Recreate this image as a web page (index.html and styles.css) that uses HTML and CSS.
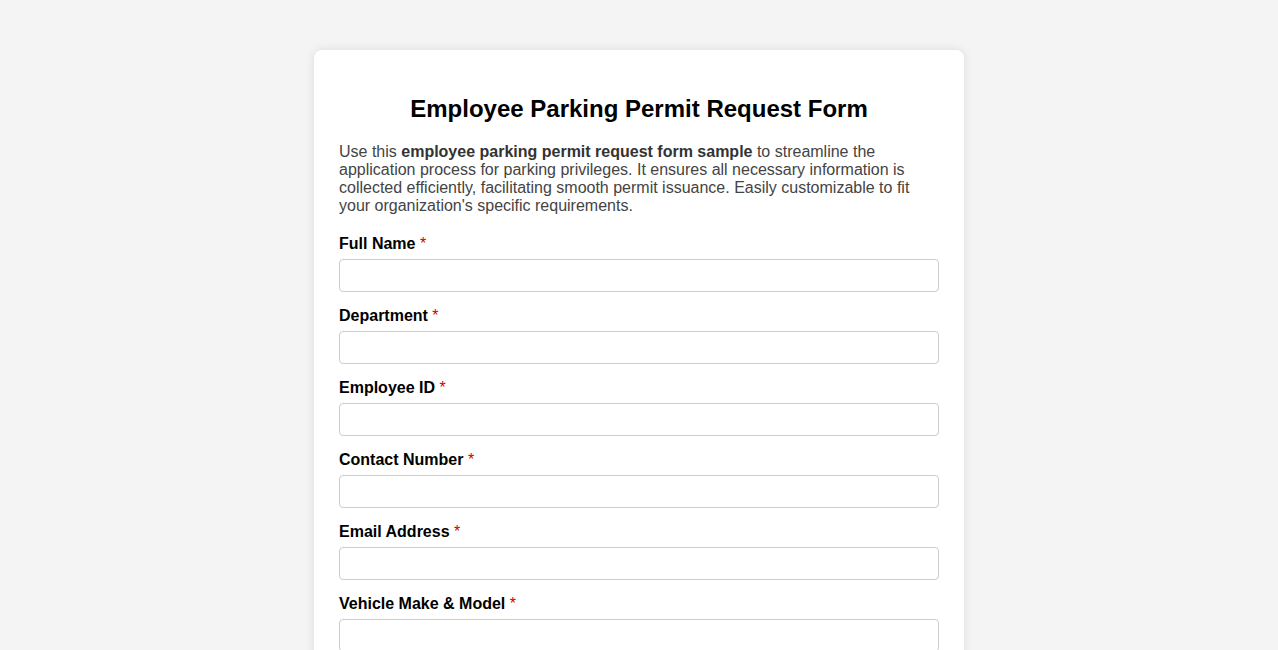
FILE: index.html
```html
<!DOCTYPE html>
<html lang="en">
<head>
<meta charset="utf-8">
<title>Employee Parking Permit Request Form</title>
<link rel="stylesheet" href="styles.css">
</head>
<body>
<div class="card">
  <h2 class="title">Employee Parking Permit Request Form</h2>
  <p class="intro">Use this <strong>employee parking permit request form sample</strong> to streamline the application process for parking privileges. It ensures all necessary information is collected efficiently, facilitating smooth permit issuance. Easily customizable to fit your organization's specific requirements.</p>
  <form>
    <div class="field">
      <label for="name">Full Name <span class="req">*</span></label>
      <input id="name" type="text">
    </div>
    <div class="field">
      <label for="dept">Department <span class="req">*</span></label>
      <input id="dept" type="text">
    </div>
    <div class="field">
      <label for="empid">Employee ID <span class="req">*</span></label>
      <input id="empid" type="text">
    </div>
    <div class="field">
      <label for="phone">Contact Number <span class="req">*</span></label>
      <input id="phone" type="text">
    </div>
    <div class="field">
      <label for="email">Email Address <span class="req">*</span></label>
      <input id="email" type="text">
    </div>
    <div class="field">
      <label for="vehicle">Vehicle Make &amp; Model <span class="req">*</span></label>
      <input id="vehicle" type="text">
    </div>
    <div class="field">
      <label for="plate">License Plate Number <span class="req">*</span></label>
      <input id="plate" type="text">
    </div>
  </form>
</div>
</body>
</html>
```

FILE: styles.css
```css
body {
  margin: 0;
  background: #f4f4f4;
  font-family: "Liberation Sans", Arial, sans-serif;
}
.card {
  width: 600px;
  margin: 50px auto;
  padding: 25px;
  background: #fff;
  border-radius: 8px;
  box-shadow: 0 0 10px rgba(0, 0, 0, 0.1);
}
.title {
  font-size: 24px;
  font-weight: bold;
  text-align: center;
  color: #000;
  margin: 20px 0;
}
.intro {
  font-size: 16px;
  color: #444;
  margin: 0 0 20px;
}
.intro strong {
  color: #333;
}
.field {
  margin-bottom: 15px;
}
.field label {
  display: block;
  font-weight: bold;
  font-size: 16px;
  color: #000;
  margin-bottom: 6px;
}
.req {
  color: #c00;
  font-weight: normal;
}
.field input {
  display: block;
  width: 100%;
  box-sizing: border-box;
  padding: 8px;
  border: 1px solid #ccc;
  border-radius: 4px;
  font-family: "Liberation Sans", Arial, sans-serif;
  font-size: 13.333px;
}
```
